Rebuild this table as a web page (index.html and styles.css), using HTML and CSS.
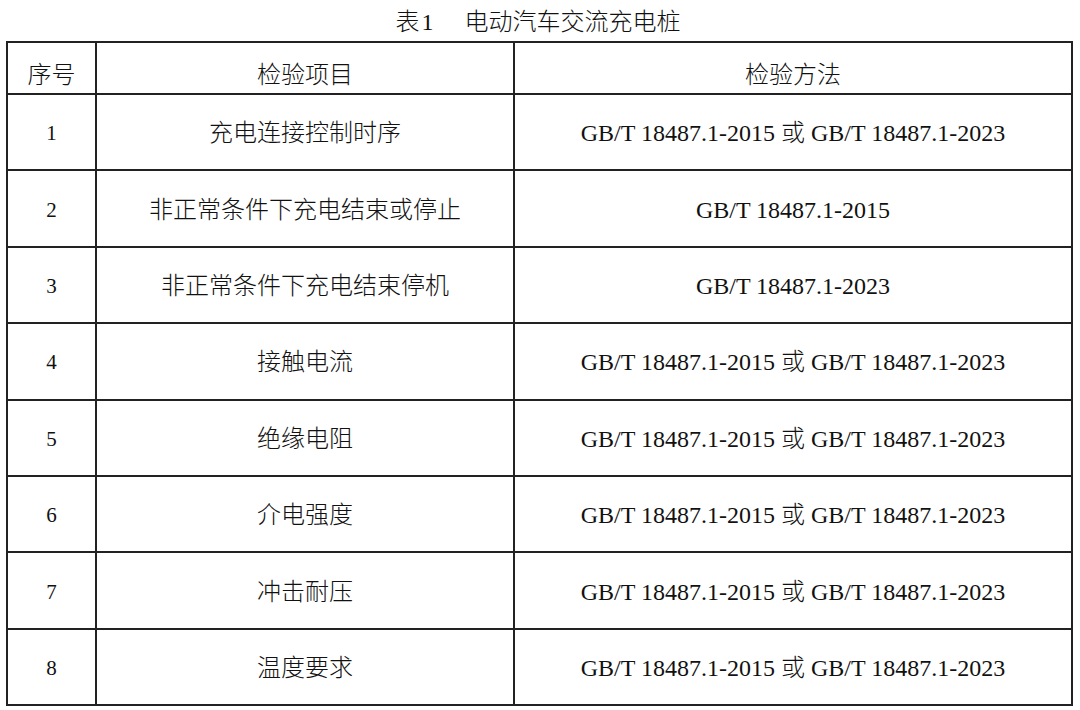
FILE: index.html
```html
<!DOCTYPE html>
<html lang="zh-CN">
<head>
<meta charset="utf-8">
<title>表1 电动汽车交流充电桩</title>
<link rel="stylesheet" href="styles.css">
</head>
<body>
<div class="page">
  <h1 class="title"><span class="title-num">表1</span><span class="title-text">电动汽车交流充电桩</span></h1>
  <table class="spec">
    <colgroup>
      <col class="c-no">
      <col class="c-item">
      <col class="c-method">
    </colgroup>
    <thead>
      <tr class="head-row">
        <th>序号</th>
        <th>检验项目</th>
        <th>检验方法</th>
      </tr>
    </thead>
    <tbody>
      <tr><td class="no">1</td><td>充电连接控制时序</td><td>GB/T 18487.1-2015 或 GB/T 18487.1-2023</td></tr>
      <tr><td class="no">2</td><td>非正常条件下充电结束或停止</td><td>GB/T 18487.1-2015</td></tr>
      <tr><td class="no">3</td><td>非正常条件下充电结束停机</td><td>GB/T 18487.1-2023</td></tr>
      <tr><td class="no">4</td><td>接触电流</td><td>GB/T 18487.1-2015 或 GB/T 18487.1-2023</td></tr>
      <tr><td class="no">5</td><td>绝缘电阻</td><td>GB/T 18487.1-2015 或 GB/T 18487.1-2023</td></tr>
      <tr><td class="no">6</td><td>介电强度</td><td>GB/T 18487.1-2015 或 GB/T 18487.1-2023</td></tr>
      <tr><td class="no">7</td><td>冲击耐压</td><td>GB/T 18487.1-2015 或 GB/T 18487.1-2023</td></tr>
      <tr><td class="no">8</td><td>温度要求</td><td>GB/T 18487.1-2015 或 GB/T 18487.1-2023</td></tr>
    </tbody>
  </table>
</div>
</body>
</html>
```
FILE: styles.css
```css
html, body {
  margin: 0;
  padding: 0;
  background: #ffffff;
}
body {
  font-family: "Liberation Serif", "Noto Sans CJK SC", serif;
  color: #111111;
}
.page {
  padding: 0 0 0 6px;
  width: 1067px;
}
.title {
  margin: 0;
  height: 41px;
  font-size: 24px;
  font-weight: 300;
  line-height: 44px;
  text-align: center;
  display: flex;
  justify-content: center;
  gap: 29px;
  padding-right: 3px;
}
.title-num {
  letter-spacing: 2px;
}
.spec {
  width: 1067px;
  border-collapse: collapse;
  table-layout: fixed;
  border: 2px solid #222;
}
.c-no { width: 89px; }
.c-item { width: 418px; }
.c-method { width: 558px; }
.spec th,
.spec td {
  border: 2px solid #222;
  text-align: center;
  vertical-align: middle;
  padding: 0;
  font-size: 24px;
  font-weight: 300;
  line-height: 28px;
}
.head-row {
  height: 52px;
}
.head-row th {
  padding-top: 13px;
}
.spec tbody tr {
  height: 76.4px;
}
.spec tbody td {
  padding-top: 2px;
}
.spec td.no {
  font-size: 21px;
}
```
